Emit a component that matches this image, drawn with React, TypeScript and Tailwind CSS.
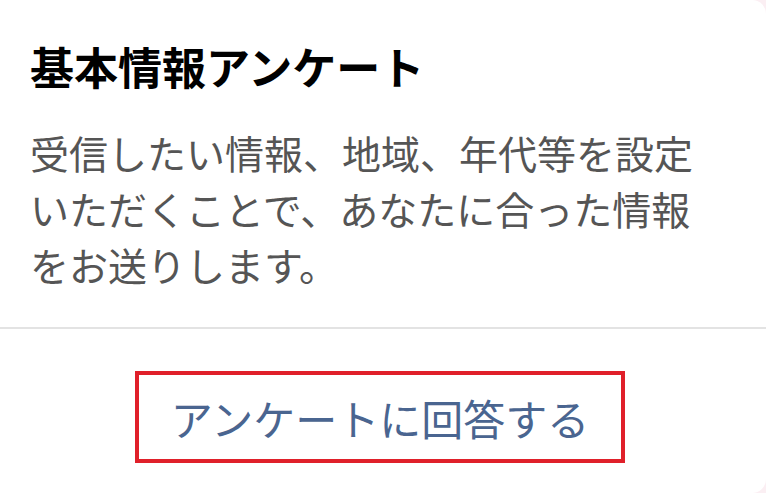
export default function App() {
  return (
    <div className="h-[493px] w-[766px] overflow-hidden bg-[#fbeff3] font-['Noto_Sans_CJK_JP',sans-serif]">
      <div className="h-full w-full rounded-r-[14px] bg-white">
        <div className="px-[30px] pb-[35px] pt-[34px]">
          <h1 className="text-[44px] font-bold leading-[64px] text-black">基本情報アンケート</h1>
          <p className="mt-[26px] w-[680px] text-[39px] leading-[56px] text-[#555555]">
            受信したい情報、地域、年代等を設定いただくことで、あなたに合った情報をお送りします。
          </p>
        </div>
        <div className="h-[2px] bg-[#e3e3e3]" />
        <div className="flex justify-center pt-[42px]">
          <button className="ml-[-6px] flex h-[92px] w-[490px] items-center justify-center border-4 border-[#e0202a] text-[42px] text-[#4a6590]">
            アンケートに回答する
          </button>
        </div>
      </div>
    </div>
  )
}
